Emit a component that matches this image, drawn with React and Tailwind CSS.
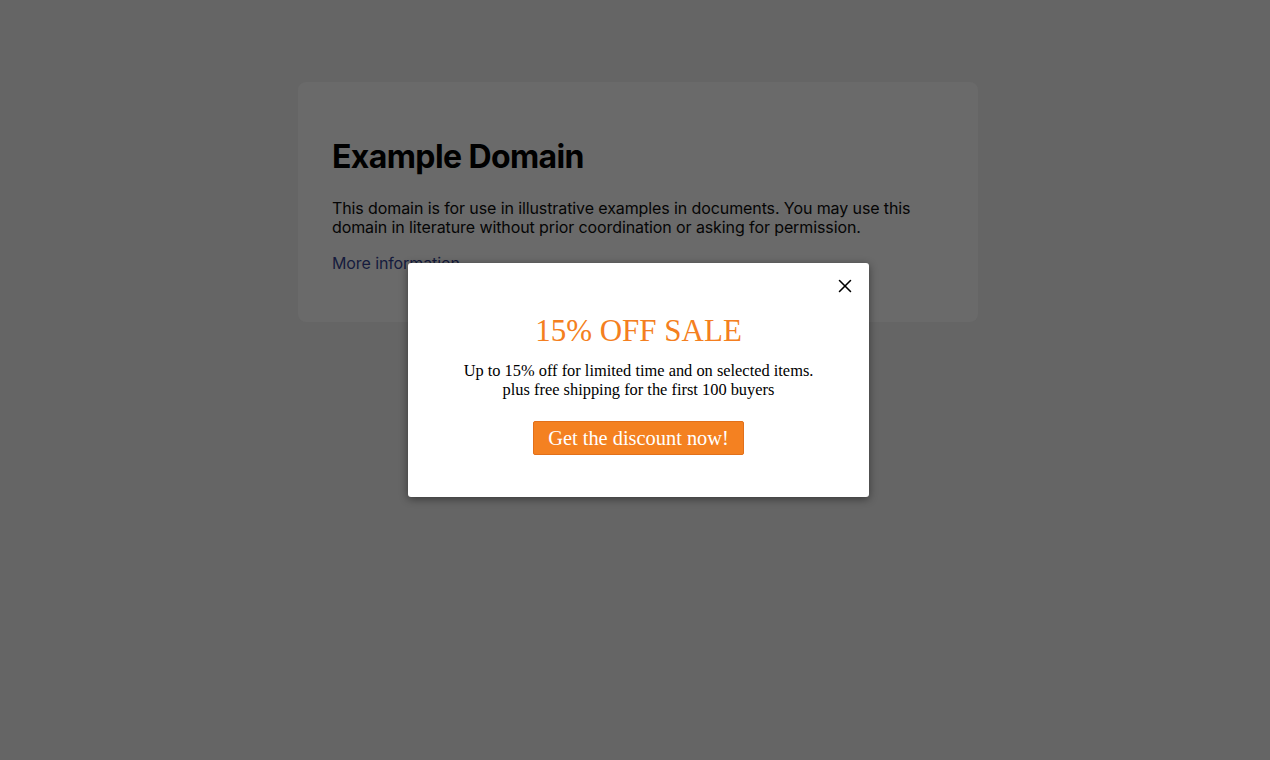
import { X } from 'lucide-react';

const serif = { fontFamily: '"Liberation Serif", "Times New Roman", serif' };

export default function App() {
  return (
    <div className="relative h-[760px] w-full overflow-hidden bg-[#656565]" style={{ fontFamily: 'Inter, "Noto Sans", sans-serif' }}>
      <div className="ml-[298px] mt-[82px] w-[680px] rounded-lg bg-[#6a6a6a] px-[34px] pb-[49px] pt-[56px]">
        <h1 className="text-[32px] font-bold leading-[38px] tracking-[-0.6px] text-black">Example Domain</h1>
        <p className="mt-[23px] text-[16px] leading-[19px] tracking-[-0.1px] text-[#050505]">
          This domain is for use in illustrative examples in documents. You may use this domain in literature without prior coordination or asking for permission.
        </p>
        <a href="#" className="mt-[17px] block text-[16px] leading-[19px] tracking-[-0.1px] text-[#151b3d]">More information...</a>
      </div>

      <div className="absolute left-[408px] top-[263px] w-[461px] rounded-[3px] bg-white pb-[42px] pt-[50px] text-center shadow-[0_2px_8px_rgba(0,0,0,0.45)]" style={serif}>
        <button className="absolute right-[13px] top-[12px] text-black">
          <X size={22} strokeWidth={1.7} />
        </button>
        <h2 className="text-[31px] leading-[36px] text-[#f47f20]">15% OFF SALE</h2>
        <p className="mt-[12px] text-[16.4px] leading-[19px] text-black">
          Up to 15% off for limited time and on selected items.
          <br />
          plus free shipping for the first 100 buyers
        </p>
        <button className="mt-[22px] rounded-[2px] border border-[#e2701a] bg-[#f48121] px-[14px] py-[4px] text-[20.4px] leading-[24px] text-white">
          Get the discount now!
        </button>
      </div>
    </div>
  );
}
